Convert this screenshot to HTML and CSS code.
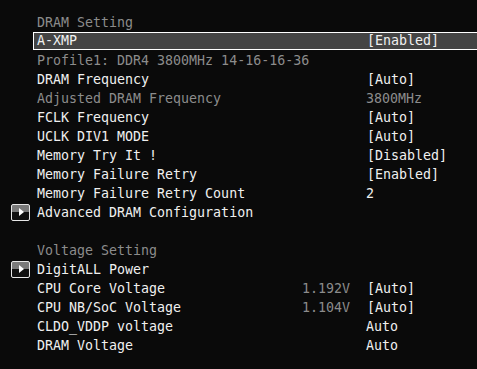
FILE: index.html
```html
<!DOCTYPE html>
<html lang="en">
<head>
    <meta charset="UTF-8">
    <meta name="viewport" content="width=device-width, initial-scale=1.0">
    <title>DRAM Setting</title>
    <link rel="stylesheet" href="styles.css">
</head>
<body>
    <div class="screen">
        <div class="row title"><span class="slot"></span><div class="item"><span>DRAM Setting</span></div></div>
        <div class="row selected"><span class="slot"></span><div class="item"><span>A-XMP</span><span></span><span>[Enabled]</span></div></div>
        <div class="row dim"><span class="slot"></span><div class="item"><span class="wide">Profile1: DDR4 3800MHz 14-16-16-36</span></div></div>
        <div class="row"><span class="slot"></span><div class="item"><span>DRAM Frequency</span><span></span><span>[Auto]</span></div></div>
        <div class="row dim"><span class="slot"></span><div class="item"><span>Adjusted DRAM Frequency</span><span></span><span class="plain">3800MHz</span></div></div>
        <div class="row"><span class="slot"></span><div class="item"><span>FCLK Frequency</span><span></span><span>[Auto]</span></div></div>
        <div class="row"><span class="slot"></span><div class="item"><span>UCLK DIV1 MODE</span><span></span><span>[Auto]</span></div></div>
        <div class="row"><span class="slot"></span><div class="item"><span>Memory Try It !</span><span></span><span>[Disabled]</span></div></div>
        <div class="row"><span class="slot"></span><div class="item"><span>Memory Failure Retry</span><span></span><span>[Enabled]</span></div></div>
        <div class="row"><span class="slot"></span><div class="item"><span>Memory Failure Retry Count</span><span></span><span class="plain">2</span></div></div>
        <div class="row"><span class="slot"><i class="sub"></i></span><div class="item"><span>Advanced DRAM Configuration</span></div></div>
        <div class="row"></div>
        <div class="row title"><span class="slot"></span><div class="item"><span>Voltage Setting</span></div></div>
        <div class="row"><span class="slot"><i class="sub"></i></span><div class="item"><span>DigitALL Power</span></div></div>
        <div class="row"><span class="slot"></span><div class="item"><span>CPU Core Voltage</span><span class="volt">1.192V</span><span>[Auto]</span></div></div>
        <div class="row"><span class="slot"></span><div class="item"><span>CPU NB/SoC Voltage</span><span class="volt">1.104V</span><span>[Auto]</span></div></div>
        <div class="row"><span class="slot"></span><div class="item"><span>CLDO_VDDP voltage</span><span></span><span class="plain">Auto</span></div></div>
        <div class="row"><span class="slot"></span><div class="item"><span>DRAM Voltage</span><span></span><span class="plain">Auto</span></div></div>
    </div>
</body>
</html>
```

FILE: styles.css
```css
html, body {
    margin: 0;
    background-color: #0a0a0a;
}
.screen {
    padding-top: 13px;
    font-family: "DejaVu Sans Mono", "Liberation Mono", monospace;
    font-size: 13.3px;
    color: #f0f0f0;
    overflow: hidden;
    height: 356px;
}
.row {
    display: flex;
    height: 19px;
    line-height: 19px;
}
.slot {
    width: 33px;
    flex: none;
    display: flex;
    align-items: center;
}
.item {
    flex: 1;
    display: grid;
    grid-template-columns: 265px 65px 1fr;
    padding-left: 4px;
    white-space: nowrap;
}
.item .wide {
    grid-column: 1 / 4;
}
.title, .dim {
    color: #8c8c8c;
}
.volt {
    color: #8c8c8c;
}
.plain {
    margin-left: -1px;
}
.selected .item {
    height: 18px;
    line-height: 16px;
    padding-left: 3px;
    margin-right: -20px;
    border: 1px solid #ffffff;
    background-color: #444444;
    box-sizing: border-box;
}
.sub {
    position: relative;
    display: block;
    width: 19px;
    height: 17px;
    margin-left: 11px;
    box-sizing: border-box;
    border: 1px solid #e8e8e8;
    border-radius: 2px;
    background: linear-gradient(#7a7a7a 50%, #111111 50%);
}
.sub::after {
    content: "";
    position: absolute;
    left: 7px;
    top: 3px;
    border-left: 5px solid #ffffff;
    border-top: 4.5px solid transparent;
    border-bottom: 4.5px solid transparent;
}
```
